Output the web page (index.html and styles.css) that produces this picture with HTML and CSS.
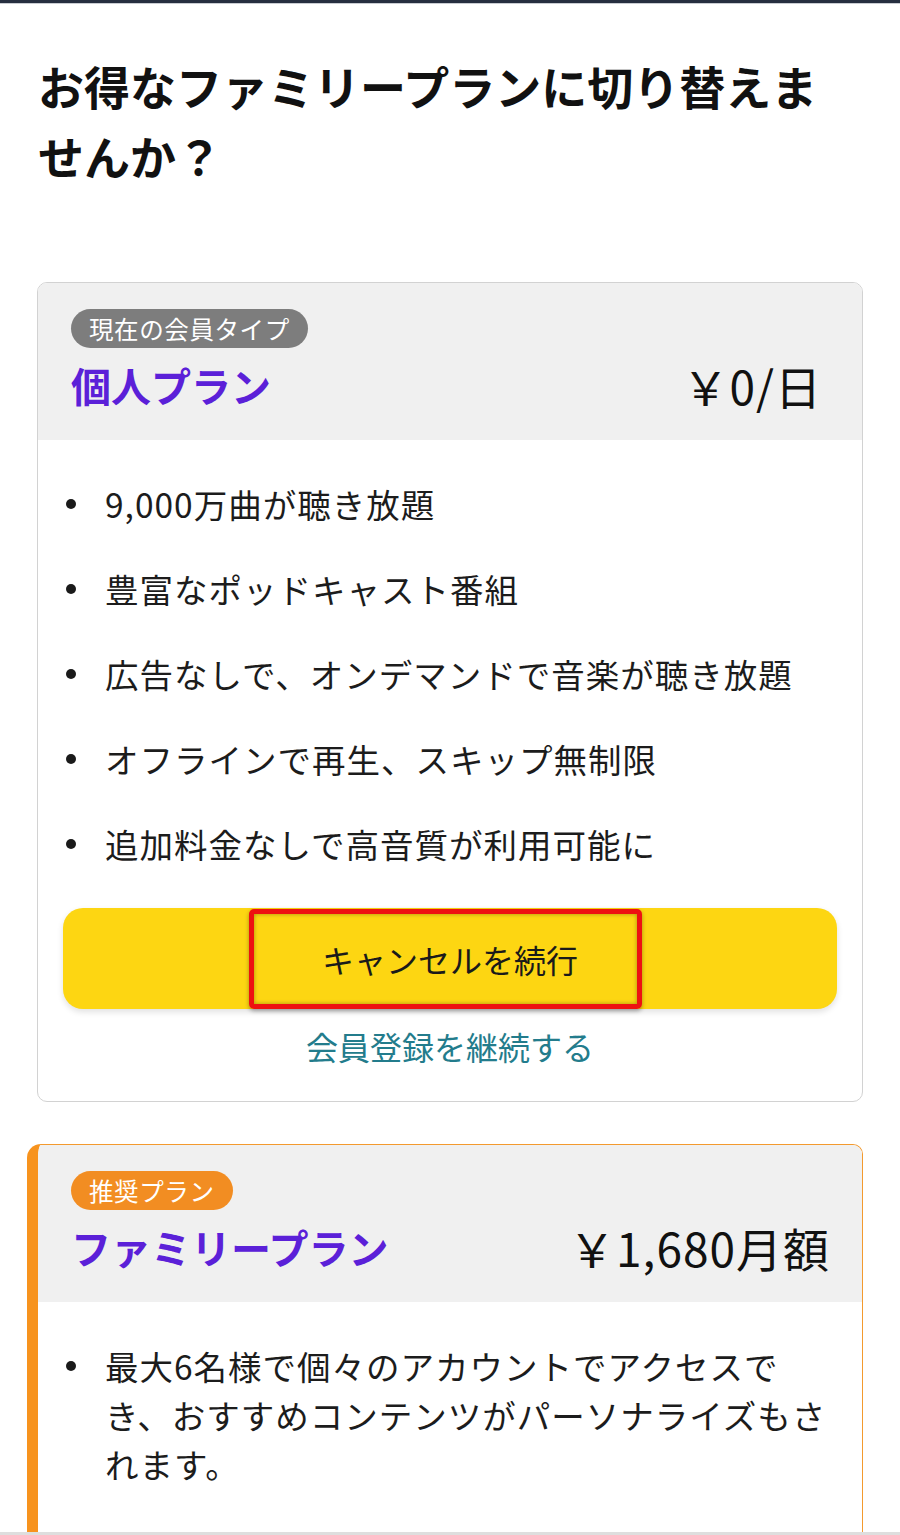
FILE: index.html
```html
<!DOCTYPE html>
<html lang="ja">
<head>
<meta charset="utf-8">
<title>ファミリープラン</title>
<link rel="stylesheet" href="styles.css">
</head>
<body>
<div class="page">
  <div class="topbar"></div>
  <main class="main">
    <h1 class="heading">お得なファミリープランに切り替えませんか？</h1>

    <section class="card card-current">
      <div class="card-head">
        <span class="badge badge-gray">現在の会員タイプ</span>
        <div class="title-row">
          <span class="plan-name">個人プラン</span>
          <span class="plan-price">￥0/日</span>
        </div>
      </div>
      <div class="card-body">
        <ul class="features">
          <li>9,000万曲が聴き放題</li>
          <li>豊富なポッドキャスト番組</li>
          <li>広告なしで、オンデマンドで音楽が聴き放題</li>
          <li>オフラインで再生、スキップ無制限</li>
          <li>追加料金なしで高音質が利用可能に</li>
        </ul>
        <div class="btn">
          <span>キャンセルを続行</span>
          <span class="highlight"></span>
        </div>
        <a class="link">会員登録を継続する</a>
      </div>
    </section>

    <section class="card card-family">
      <div class="card-head">
        <span class="badge badge-orange">推奨プラン</span>
        <div class="title-row">
          <span class="plan-name">ファミリープラン</span>
          <span class="plan-price">￥1,680月額</span>
        </div>
      </div>
      <div class="card-body">
        <ul class="features">
          <li>最大6名様で個々のアカウントでアクセスでき、おすすめコンテンツがパーソナライズもされます。</li>
        </ul>
      </div>
    </section>
  </main>
</div>
</body>
</html>
```
FILE: styles.css
```css
* { box-sizing: border-box; }
html, body { margin: 0; padding: 0; background: #fff; }
body {
  font-family: "Noto Sans CJK JP", "Noto Sans", sans-serif;
  color: #1a1a1a;
}
.page {
  height: 1535px;
  overflow: hidden;
  border-bottom: 3px solid #dedede;
}
.topbar {
  height: 4px;
  background: #262e3f;
  border-bottom: 1px solid #c9ccd2;
}
.main {
  padding: 0 37px 0 37px;
}
.heading {
  margin: 46px 0 0 1px;
  padding-right: 14px;
  font-size: 46px;
  line-height: 70px;
  font-weight: 700;
  color: #111;
}
.card {
  margin-top: 92px;
  border: 1px solid #d2d2d2;
  border-radius: 10px;
  overflow: hidden;
  background: #fff;
}
.card-family {
  margin-top: 42px;
  margin-left: -10px;
  border: 1px solid #f39a2e;
  border-left: 11px solid #f7931e;
  border-radius: 14px 10px 0 0;
}
.card-head {
  background: #f0f0f0;
  padding: 26px 40px 27px 33px;
}
.badge {
  display: inline-block;
  height: 39px;
  line-height: 39px;
  padding: 0 18px;
  border-radius: 20px;
  font-size: 24.5px;
  letter-spacing: 0.6px;
  color: #fff;
  white-space: nowrap;
}
.badge-gray { background: #7d7d7d; }
.badge-orange { background: #f28d22; }
.title-row {
  display: flex;
  justify-content: space-between;
  align-items: center;
  margin-top: 9px;
  height: 56px;
}
.plan-name {
  font-size: 40px;
  font-weight: 700;
  color: #5b20d8;
  line-height: 56px;
}
.plan-price {
  font-size: 46px;
  line-height: 56px;
  color: #111;
  font-weight: 400;
  letter-spacing: 1px;
}
.card-family .plan-price { margin-right: -8px; }
.card-body {
  padding: 39px 25px 33px 25px;
}
.features {
  list-style: none;
  margin: 0;
  padding: 0;
  display: flex;
  flex-direction: column;
  gap: 36px;
}
.features li {
  display: flex;
  font-size: 33.5px;
  line-height: 49px;
  letter-spacing: 1px;
  color: #1c1c1c;
}
.features li::before {
  content: "";
  flex: 0 0 10px;
  width: 10px;
  height: 10px;
  margin: 20px 29px 0 3px;
  border-radius: 50%;
  background: #1a1a1a;
}
.btn {
  position: relative;
  margin-top: 40px;
  height: 101px;
  border-radius: 20px;
  background: #fdd612;
  box-shadow: 0 3px 6px rgba(0, 0, 0, 0.12);
  display: flex;
  align-items: center;
  justify-content: center;
  font-size: 32px;
  color: #1a1a1a;
}
.highlight {
  position: absolute;
  left: 186px;
  top: 1px;
  width: 393px;
  height: 100px;
  border: 5px solid #ee1111;
  border-radius: 5px;
  box-shadow: 0 2px 4px rgba(0, 0, 0, 0.35), inset 0 0 4px rgba(0, 0, 0, 0.35);
}
.link {
  display: block;
  margin-top: 15px;
  text-align: center;
  font-size: 32px;
  line-height: 44px;
  color: #237c8c;
}
.card-family .card-body { padding-bottom: 80px; }
```
